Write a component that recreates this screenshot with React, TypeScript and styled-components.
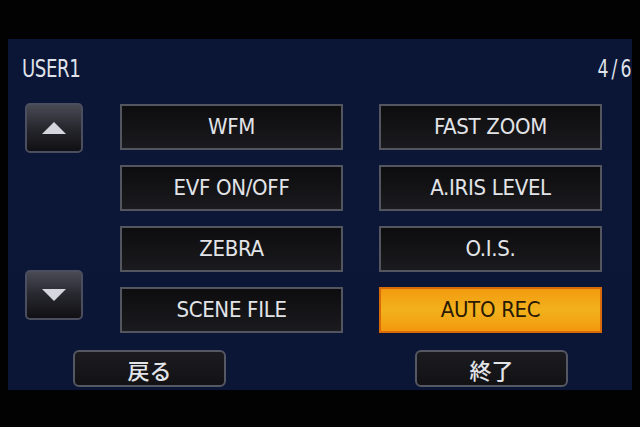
import React from "react";
import styled, { createGlobalStyle } from "styled-components";

const Global = createGlobalStyle`
  html, body { margin: 0; padding: 0; background: #000; }
  body { width: 640px; height: 427px; overflow: hidden; }
`;

const Page = styled.div`
  width: 640px;
  height: 427px;
  background: #020203;
  padding: 39px 0 0 8px;
  box-sizing: border-box;
`;

const Screen = styled.div`
  width: 624px;
  height: 351px;
  background: linear-gradient(180deg, #0b1535 0%, #0c1738 50%, #0b1636 100%);
  display: flex;
  flex-direction: column;
  font-family: "DejaVu Sans Condensed", "DejaVu Sans", sans-serif;
  font-stretch: condensed;
  color: #e4e6ea;
  overflow: hidden;
`;

const Header = styled.div`
  height: 64px;
  box-sizing: border-box;
  padding: 16px 1px 0 14px;
  display: flex;
  justify-content: space-between;
  align-items: flex-start;
  font-size: 24px;
  line-height: 28px;
  color: #dfe2ea;
`;

const Title = styled.span`
  display: inline-block;
  transform: scaleX(0.84);
  transform-origin: left center;
  letter-spacing: -0.5px;
`;

const PageNo = styled.span`
  display: inline-block;
  transform: scaleX(0.8);
  transform-origin: right center;
  word-spacing: -3px;
`;

const Body = styled.div`
  display: flex;
  align-items: flex-start;
`;

const ArrowCol = styled.div`
  margin-left: 17px;
  width: 58px;
  height: 217px;
  display: flex;
  flex-direction: column;
  justify-content: space-between;
`;

const ArrowButton = styled.div`
  width: 58px;
  height: 50px;
  box-sizing: border-box;
  border: 2px solid #4b4e5e;
  border-radius: 5px;
  background: linear-gradient(180deg, #484a54 0%, #27272e 50%, #101014 100%);
  display: flex;
  align-items: center;
  justify-content: center;
`;

const Grid = styled.div`
  margin-left: 37px;
  margin-top: 1px;
  display: grid;
  grid-template-columns: 223px 223px;
  grid-auto-rows: 46px;
  column-gap: 36px;
  row-gap: 15px;
`;

const MenuButton = styled.div<{ $active?: boolean }>`
  box-sizing: border-box;
  border: 2px solid ${(p) => (p.$active ? "#d96a0a" : "#53565f")};
  background: ${(p) =>
    p.$active
      ? "linear-gradient(180deg, #f39a10 0%, #f2b21c 50%, #f3980e 100%)"
      : "linear-gradient(180deg, #0d0d10 0%, #151518 60%, #1b1b1f 100%)"};
  color: ${(p) => (p.$active ? "#2a1a04" : "#e2e4e8")};
  display: flex;
  align-items: center;
  justify-content: center;
  font-size: 22px;
  letter-spacing: -0.3px;
  padding-bottom: 1px;
`;

const Footer = styled.div`
  margin-top: 17px;
  padding-left: 65px;
  display: flex;
  gap: 189px;
`;

const FooterButton = styled.div`
  width: 153px;
  height: 37px;
  box-sizing: border-box;
  border: 2px solid #555862;
  border-radius: 6px;
  background: linear-gradient(180deg, #1c1c20 0%, #121215 100%);
  display: flex;
  align-items: center;
  justify-content: center;
  font-family: "Noto Sans CJK JP", sans-serif;
  font-size: 22px;
  font-weight: 500;
  color: #e2e4e8;
`;

const Triangle = ({ down }: { down?: boolean }) => (
  <svg width="24" height="12" viewBox="0 0 24 12">
    <polygon
      points={down ? "0,0 24,0 12,12" : "12,0 24,12 0,12"}
      fill="#d6d7de"
    />
  </svg>
);

const items: { label: string; active?: boolean }[] = [
  { label: "WFM" },
  { label: "FAST ZOOM" },
  { label: "EVF ON/OFF" },
  { label: "A.IRIS LEVEL" },
  { label: "ZEBRA" },
  { label: "O.I.S." },
  { label: "SCENE FILE" },
  { label: "AUTO REC", active: true },
];

export default function App() {
  return (
    <>
      <Global />
      <Page>
        <Screen>
          <Header>
            <Title>USER1</Title>
            <PageNo>4 / 6</PageNo>
          </Header>
          <Body>
            <ArrowCol>
              <ArrowButton>
                <Triangle />
              </ArrowButton>
              <ArrowButton>
                <Triangle down />
              </ArrowButton>
            </ArrowCol>
            <Grid>
              {items.map((it) => (
                <MenuButton key={it.label} $active={it.active}>
                  {it.label}
                </MenuButton>
              ))}
            </Grid>
          </Body>
          <Footer>
            <FooterButton>戻る</FooterButton>
            <FooterButton>終了</FooterButton>
          </Footer>
        </Screen>
      </Page>
    </>
  );
}
